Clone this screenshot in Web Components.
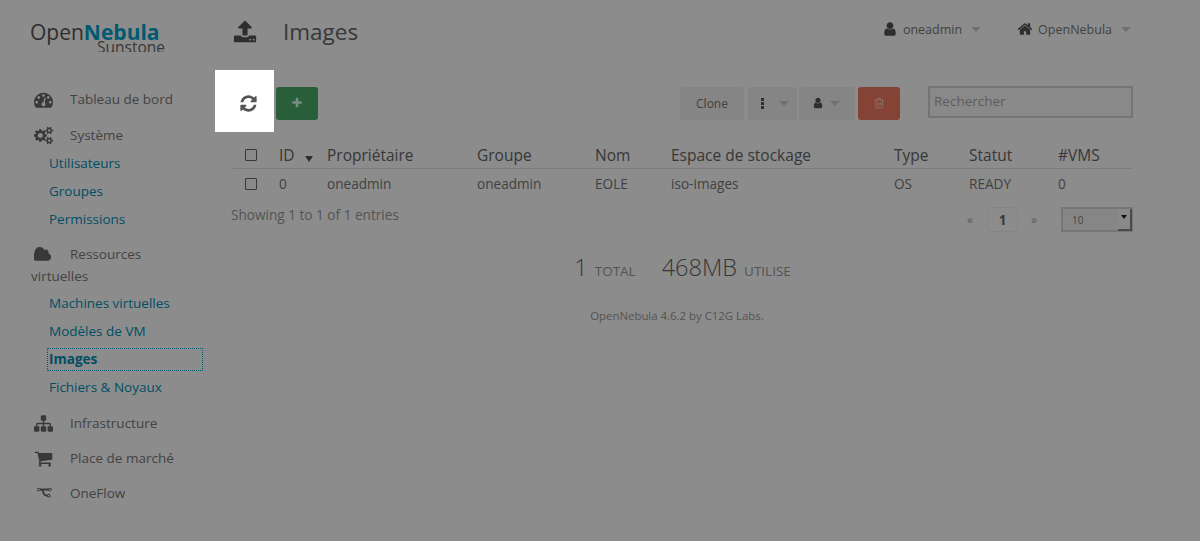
<!DOCTYPE html>
<html lang="fr">
<head>
<meta charset="utf-8">
<title>OpenNebula Sunstone</title>
<style>
  html, body { margin: 0; height: 541px; overflow: hidden; background: #fff; }
  body { font-family: "Open Sans", "Liberation Sans", sans-serif; color: #555; }
</style>
</head>
<body>
<one-app>
  <side-nav>
    <nav-item icon="dashboard">Tableau de bord</nav-item>
    <nav-item icon="cogs" gap="8">Système</nav-item>
    <sub-item>Utilisateurs</sub-item>
    <sub-item>Groupes</sub-item>
    <sub-item>Permissions</sub-item>
    <nav-item icon="cloud" gap="12" bottom="5">Ressources virtuelles</nav-item>
    <sub-item>Machines virtuelles</sub-item>
    <sub-item>Modèles de VM</sub-item>
    <sub-item active>Images</sub-item>
    <sub-item>Fichiers &amp; Noyaux</sub-item>
    <nav-item icon="sitemap" gap="13">Infrastructure</nav-item>
    <nav-item icon="cart" gap="7">Place de marché</nav-item>
    <nav-item icon="flow" gap="7">OneFlow</nav-item>
  </side-nav>
  <main-pane>
    <top-bar></top-bar>
    <tool-bar></tool-bar>
    <image-table></image-table>
    <table-footer></table-footer>
    <image-stats></image-stats>
  </main-pane>
</one-app>

<script>
const PATHS = {
  refresh: ['0 0 1792 1792', 'M1639 1056q0 5-1 7-64 268-268 434.5t-478 166.5q-146 0-282.5-55t-243.5-157l-129 129q-19 19-45 19t-45-19-19-45v-448q0-26 19-45t45-19h448q26 0 45 19t19 45-19 45l-137 137q71 66 161 102t187 36q134 0 250-65t186-179q11-17 53-117 8-23 30-23h192q13 0 22.5 9.5t9.5 22.5zm25-800v448q0 26-19 45t-45 19h-448q-26 0-45-19t-19-45 19-45l138-138q-148-137-349-137-134 0-250 65t-186 179q-11 17-53 117-8 23-30 23h-199q-13 0-22.5-9.5t-9.5-22.5v-7q65-268 270-434.5t480-166.5q146 0 284 55.5t245 156.5l130-129q19-19 45-19t45 19 19 45z'],
  user: ['0 0 1792 1792', 'M1536 1399q0 109-62.5 187t-150.5 78h-854q-88 0-150.5-78t-62.5-187q0-85 8.500-160.500t31.500-152 58.500-131 94-89 134.500-34.500q131 128 313 128t313-128q76 0 134.500 34.500t94 89 58.500 131 31.500 152 8.500 160.500zm-256-887q0 159-112.500 271.500t-271.500 112.500-271.500-112.500-112.500-271.500 112.500-271.500 271.500-112.500 271.500 112.500 112.500 271.500z'],
  home: ['0 0 1792 1792', 'M1472 992v480q0 26-19 45t-45 19h-384v-384h-256v384h-384q-26 0-45-19t-19-45v-480q0-1 .5-3t.5-3l575-474 575 474q1 2 1 6zm223-69l-62 74q-8 9-21 11h-3q-13 0-21-7l-692-577-692 577q-12 8-24 7-13-2-21-11l-62-74q-8-10-7-23.500t11-21.500l719-599q32-26 76-26t76 26l244 204v-195q0-14 9-23t23-9h192q14 0 23 9t9 23v408l219 182q10 8 11 21.500t-7 23.500z'],
  plus: ['0 0 1792 1792', 'M1600 736v192q0 40-28 68t-68 28h-416v416q0 40-28 68t-68 28h-192q-40 0-68-28t-28-68v-416h-416q-40 0-68-28t-28-68v-192q0-40 28-68t68-28h416v-416q0-40 28-68t68-28h192q40 0 68 28t28 68v416h416q40 0 68 28t28 68z'],
  trash: ['0 0 1792 1792', 'M704 736v576q0 14-9 23t-23 9h-64q-14 0-23-9t-9-23v-576q0-14 9-23t23-9h64q14 0 23 9t9 23zm256 0v576q0 14-9 23t-23 9h-64q-14 0-23-9t-9-23v-576q0-14 9-23t23-9h64q14 0 23 9t9 23zm256 0v576q0 14-9 23t-23 9h-64q-14 0-23-9t-9-23v-576q0-14 9-23t23-9h64q14 0 23 9t9 23zm128 724v-948h-896v948q0 22 7 40.500t14.500 27 10.500 8.500h832q3 0 10.500-8.500t14.500-27 7-40.500zm-672-1076h448l-48-117q-7-9-17-11h-317q-10 2-17 11zm928 32v64q0 14-9 23t-23 9h-96v948q0 83-47 143.500t-113 60.500h-832q-66 0-113-58.500t-47-141.500v-952h-96q-14 0-23-9t-9-23v-64q0-14 9-23t23-9h309l70-167q15-37 54-63t79-26h320q40 0 79 26t54 63l70 167h309q14 0 23 9t9 23z'],
  cloud: ['0 0 1920 1792', 'M1728 1152q0 159-112.500 271.500t-271.500 112.500h-1088q-185 0-316.500-131.500t-131.500-316.500q0-132 71-241.500t187-163.500q-2-28-2-43 0-212 150-362t362-150q158 0 286.500 88t187.500 230q70-62 166-62 106 0 181 75t75 181q0 75-41 138 129 30 213 134.500t84 239.500z'],
  sitemap: ['0 0 1792 1792', 'M1792 1248v320q0 40-28 68t-68 28h-320q-40 0-68-28t-28-68v-320q0-40 28-68t68-28h96v-192h-512v192h96q40 0 68 28t28 68v320q0 40-28 68t-68 28h-320q-40 0-68-28t-28-68v-320q0-40 28-68t68-28h96v-192h-512v192h96q40 0 68 28t28 68v320q0 40-28 68t-68 28h-320q-40 0-68-28t-28-68v-320q0-40 28-68t68-28h96v-192q0-52 38-90t90-38h512v-192h-96q-40 0-68-28t-28-68v-320q0-40 28-68t68-28h320q40 0 68 28t28 68v320q0 40-28 68t-68 28h-96v192h512q52 0 90 38t38 90v192h96q40 0 68 28t28 68z'],
  cart: ['0 0 1792 1792', 'M704 1536q0 52-38 90t-90 38-90-38-38-90 38-90 90-38 90 38 38 90zm896 0q0 52-38 90t-90 38-90-38-38-90 38-90 90-38 90 38 38 90zm128-1088v512q0 24-16.500 42.500t-40.500 21.500l-1044 122q13 60 13 70 0 16-24 64h920q26 0 45 19t19 45-19 45-45 19h-1024q-26 0-45-19t-19-45q0-11 8-31.500t16-36 21.500-40 15.500-29.500l-177-823h-204q-26 0-45-19t-19-45 19-45 45-19h256q16 0 28.500 6.500t19.500 15.500 13 24.500 8 26 5.500 29.500 4.500 26h1201q26 0 45 19t19 45z'],
  dashboard: ['0 0 1792 1792', 'M384 1152q0-53-37.500-90.500t-90.500-37.500-90.500 37.500-37.500 90.500 37.500 90.500 90.500 37.500 90.500-37.500 37.500-90.500zm192-448q0-53-37.500-90.500t-90.500-37.500-90.500 37.500-37.500 90.500 37.500 90.500 90.500 37.500 90.500-37.500 37.500-90.500zm428 481l101-382q6-26-7.500-48.500t-38.500-29.500-48 6.500-30 39.500l-101 382q-60 5-107 43.500t-63 98.500q-20 77 20 146t117 89 146-20 89-117q16-60-6-117t-72-91zm660-33q0-53-37.500-90.500t-90.500-37.500-90.500 37.500-37.500 90.500 37.500 90.500 90.500 37.500 90.500-37.500 37.500-90.500zm-640-640q0-53-37.500-90.500t-90.500-37.500-90.500 37.500-37.500 90.500 37.500 90.500 90.500 37.500 90.500-37.500 37.500-90.500zm448 192q0-53-37.500-90.500t-90.500-37.500-90.500 37.500-37.500 90.500 37.500 90.500 90.500 37.500 90.500-37.500 37.500-90.500zm320 448q0 261-141 483-19 29-54 29h-1402q-35 0-54-29-141-221-141-483 0-182 71-348t191-286 286-191 348-71 348 71 286 191 191 286 71 348z'],
  cogs: ['0 0 1920 1792', 'M896 896q0-106-75-181t-181-75-181 75-75 181 75 181 181 75 181-75 75-181zm768 512q0-52-38-90t-90-38-90 38-38 90q0 53 37.500 90.500t90.500 37.500 90.500-37.500 37.500-90.500zm0-1024q0-52-38-90t-90-38-90 38-38 90q0 53 37.500 90.500t90.500 37.500 90.500-37.500 37.500-90.500zm-384 421v185q0 10-7 19.500t-16 10.500l-155 24q-11 35-32 76 34 48 90 115 7 11 7 20 0 12-7 19-23 30-82.500 89.500t-78.500 59.500q-11 0-21-7l-115-90q-37 19-77 31-11 108-23 155-7 24-30 24h-186q-11 0-20-7.500t-10-17.500l-23-153q-34-10-75-31l-118 89q-7 7-20 7-11 0-21-8-144-133-144-160 0-9 7-19 10-14 41-53t47-61q-23-44-35-82l-152-24q-10-1-17-9.500t-7-19.500v-185q0-10 7-19.500t16-10.500l155-24q11-35 32-76-34-48-90-115-7-11-7-20 0-12 7-20 22-30 82-89t79-59q11 0 21 7l115 90q34-18 77-32 11-108 23-154 7-24 30-24h186q11 0 20 7.500t10 17.500l23 153q34 10 75 31l118-89q8-7 20-7 11 0 21 8 144 133 144 160 0 8-7 19-12 16-42 54t-45 60q23 48 34 82l152 23q10 2 17 10.500t7 19.500zm640 533v140q0 16-149 31-12 27-30 52 51 113 51 138 0 4-4 7-122 71-124 71-8 0-46-47t-52-68q-20 2-30 2t-30-2q-14 21-52 68t-46 47q-2 0-124-71-4-3-4-7 0-25 51-138-18-25-30-52-149-15-149-31v-140q0-16 149-31 13-29 30-52-51-113-51-138 0-4 4-7 4-2 35-20t59-34 30-16q8 0 46 46.500t52 67.500q20-2 30-2t30 2q51-71 92-112l6-2q4 0 124 70 4 3 4 7 0 25-51 138 17 23 30 52 149 15 149 31zm0-1024v140q0 16-149 31-12 27-30 52 51 113 51 138 0 4-4 7-122 71-124 71-8 0-46-47t-52-68q-20 2-30 2t-30-2q-14 21-52 68t-46 47q-2 0-124-71-4-3-4-7 0-25 51-138-18-25-30-52-149-15-149-31v-140q0-16 149-31 13-29 30-52-51-113-51-138 0-4 4-7 4-2 35-20t59-34 30-16q8 0 46 46.500t52 67.500q20-2 30-2t30 2q51-71 92-112l6-2q4 0 124 70 4 3 4 7 0 25-51 138 17 23 30 52 149 15 149 31z'],
  upload: ['0 0 1792 1792', 'M1344 1472q0-26-19-45t-45-19-45 19-19 45 19 45 45 19 45-19 19-45zm256 0q0-26-19-45t-45-19-45 19-19 45 19 45 45 19 45-19 19-45zm128-224v320q0 40-28 68t-68 28h-1472q-40 0-68-28t-28-68v-320q0-40 28-68t68-28h427q21 56 70.500 92t110.500 36h256q61 0 110.500-36t70.500-92h427q40 0 68 28t28 68zm-325-648q-17 40-59 40h-256v448q0 26-19 45t-45 19h-256q-26 0-45-19t-19-45v-448h-256q-42 0-59-40-17-39 14-69l448-448q18-19 45-19t45 19l448 448q31 30 14 69z'],
  dots: ['0 0 1792 1792', 'M720 240h352v352h-352zM720 720h352v352h-352zM720 1200h352v352h-352z'],
  flow: ['0 0 1792 1792', 'M576 1376q0-40-28-68t-68-28-68 28-28 68 28 68 68 28 68-28 28-68zm0-1152q0-40-28-68t-68-28-68 28-28 68 28 68 68 28 68-28 28-68zm640 128q0-40-28-68t-68-28-68 28-28 68 28 68 68 28 68-28 28-68zm96 0q0 52-26 96.500t-70 69.500q-2 287-226 414-67 38-203 81-128 40-169.500 71t-41.500 100v26q44 25 70 69.500t26 96.500q0 80-56 136t-136 56-136-56-56-136q0-52 26-96.500t70-69.500v-820q-44-25-70-69.500t-26-96.500q0-80 56-136t136-56 136 56 56 136q0 52-26 96.500t-70 69.500v497q54-26 154-57 55-17 87.500-29.500t70.500-31 59-39.500 40.500-51 28-69.500 8.500-91.500q-44-25-70-69.500t-26-96.500q0-80 56-136t136-56 136 56 56 136z']
};

function svgIcon(name, size, extra) {
  const p = PATHS[name];
  return `<svg width="${size}" height="${size}" viewBox="${p[0]}" fill="currentColor" style="${extra || ''}"><path d="${p[1]}"/></svg>`;
}

// petite base commune pour les composants
class Base extends HTMLElement {
  constructor() {
    super();
    this.attachShadow({ mode: 'open' });
  }
  connectedCallback() {
    this.render();
  }
}

class OneApp extends Base {
  render() {
    this.shadowRoot.innerHTML = `
      <style>
        :host { display: flex; width: 1200px; height: 541px; overflow: hidden; }
        .overlay { position: absolute; inset: 0; background: rgba(0,0,0,.45); z-index: 10; }
      </style>
      <slot></slot>
      <div class="overlay"></div>
    `;
  }
}

class SideNav extends Base {
  render() {
    this.shadowRoot.innerHTML = `
      <style>
        :host { display: block; width: 215px; flex: none; box-sizing: border-box; padding: 0 12px 0 30px; }
        .logo { height: 33px; margin: 19px 0 36px; font-size: 21px; line-height: 26px; color: #555; white-space: nowrap; }
        .logo b { color: #00a5cf; font-weight: 700; }
        .logo span { display: block; height: 13px; overflow: hidden; font-size: 15.5px; line-height: 16px; margin: -6px 0 0 67px; color: #666; }
      </style>
      <div class="logo">Open<b>Nebula</b><span>Sunstone</span></div>
      <slot></slot>
    `;
  }
}

class NavItem extends Base {
  render() {
    const gap = this.getAttribute('gap') || 0;
    const bottom = this.getAttribute('bottom') || 6;
    const icon = this.getAttribute('icon');
    this.shadowRoot.innerHTML = `
      <style>
        :host { display: block; font-size: 13.5px; line-height: 22px; color: #7a7a7a; margin-top: ${gap}px; padding: 0 12px ${bottom}px 1px; }
        .ic { display: inline-block; width: 39px; vertical-align: top; color: #666; height: 22px; }
        svg { display: block; margin: 2px 0 0 3px; }
      </style>
      <span class="ic">${svgIcon(icon, 19, icon === 'flow' ? 'transform: rotate(90deg) scale(.9)' : '')}</span><slot></slot>
    `;
  }
}

class SubItem extends Base {
  render() {
    const active = this.hasAttribute('active');
    this.shadowRoot.innerHTML = `
      <style>
        :host { display: block; font-size: 13.5px; line-height: 21px; margin: 0 0 5px 17px; padding: 0 1px 0 1px; color: #0090b8; font-weight: ${active ? 700 : 400}; border: 1px dotted ${active ? '#00a5cf' : 'transparent'}; }
      </style>
      <slot></slot>
    `;
  }
}

class MainPane extends Base {
  render() {
    this.shadowRoot.innerHTML = `
      <style>
        :host { display: block; flex: 1; min-width: 0; padding-right: 67px; }
      </style>
      <slot></slot>
    `;
  }
}

class TopBar extends Base {
  render() {
    this.shadowRoot.innerHTML = `
      <style>
        :host { display: flex; align-items: center; height: 70px; box-sizing: border-box; padding: 0 2px 12px 18px; color: #555; }
        .title { display: flex; align-items: center; flex: 1; font-size: 22.5px; color: #666; margin-top: 5px; }
        .title svg { margin: 0 26px 0 0; color: #555; }
        .menu { display: flex; align-items: center; font-size: 12.5px; color: #777; margin-left: 36px; }
        .menu svg { margin-right: 5px; color: #555; }
        .caret { width: 0; height: 0; border: 5px solid transparent; border-top-color: #ccc; border-bottom: 0; margin-left: 9px; }
      </style>
      <div class="title">${svgIcon('upload', 24)}<span>Images</span></div>
      <div class="menu">${svgIcon('user', 16)}<span>oneadmin</span><i class="caret"></i></div>
      <div class="menu">${svgIcon('home', 16)}<span>OpenNebula</span><i class="caret"></i></div>
    `;
  }
}

class ToolBar extends Base {
  render() {
    this.shadowRoot.innerHTML = `
      <style>
        :host { display: flex; align-items: center; height: 62px; margin-bottom: 7px; }
        .refresh { position: relative; z-index: 20; width: 59px; height: 62px; background: #fff; display: flex; align-items: center; justify-content: center; color: #555; padding: 4px 0 0 7px; box-sizing: border-box; }
        .btn { height: 33px; box-sizing: border-box; border-radius: 3px; display: flex; align-items: center; justify-content: center; font-size: 12px; color: #777; background: #f2f2f2; margin: 4px 0 0 3px; }
        .add { width: 42px; background: #4aae6a; color: #dfe; margin-left: 2px; }
        .clone { width: 64px; margin-left: 0; }
        .drop { width: 49px; margin-left: 4px; padding-right: 1px; }
        .drop svg { margin-right: 3px; }
        .owner { width: 56px; margin-left: 2px; padding-right: 2px; }
        .del { width: 42px; background: #f07a62; color: #ffc8bb; }
        .caret { width: 0; height: 0; border: 5px solid transparent; border-top-color: #ccc; border-bottom: 0; margin-left: 6px; }
        .drop svg, .owner svg { color: #555; }
        .push { margin-left: auto; display: flex; align-items: center; }
        input { width: 205px; height: 32px; box-sizing: border-box; margin: 2px 0 0 28px; padding: 0 4px 2px; border: 2px solid #d4d4d4; background: #fafafa; font: 13.5px "Open Sans", "Liberation Sans", sans-serif; border-radius: 1px; outline: 0; }
        input::placeholder { color: #aaa; opacity: 1; }
      </style>
      <div class="refresh">${svgIcon('refresh', 19)}</div>
      <div class="btn add">${svgIcon('plus', 12)}</div>
      <div class="push">
        <div class="btn clone">Clone</div>
        <div class="btn drop">${svgIcon('dots', 15)}<i class="caret"></i></div>
        <div class="btn owner">${svgIcon('user', 12)}<i class="caret"></i></div>
        <div class="btn del">${svgIcon('trash', 12)}</div>
        <input placeholder="Rechercher">
      </div>
    `;
  }
}

class ImageTable extends Base {
  render() {
    const box = '<i class="box"></i>';
    this.shadowRoot.innerHTML = `
      <style>
        :host { display: block; margin-left: 18px; }
        table { width: 100%; border-collapse: collapse; table-layout: fixed; }
        th { font-size: 15.5px; font-weight: 400; text-align: left; height: 30px; padding: 1px 0 0; box-sizing: border-box; color: #666; box-shadow: inset 0 -1px 0 #e3e3e3; }
        td { font-size: 13.6px; height: 29px; padding: 0; color: #777; }
        .box { display: block; width: 10px; height: 10px; border: 1px solid #666; border-radius: 1px; margin-left: 12px; background: #fafafa; }
        .sort { display: inline-block; width: 0; height: 0; border: 4px solid transparent; border-top: 6px solid #555; border-bottom: 0; margin-left: 10px; vertical-align: -1px; }
      </style>
      <table>
        <colgroup><col style="width:46px"><col style="width:48px"><col style="width:150px"><col style="width:118px"><col style="width:76px"><col style="width:223px"><col style="width:75px"><col style="width:89px"><col></colgroup>
        <thead><tr><th>${box}</th><th>ID<i class="sort"></i></th><th>Propriétaire</th><th>Groupe</th><th>Nom</th><th>Espace de stockage</th><th>Type</th><th>Statut</th><th>#VMS</th></tr></thead>
        <tbody><tr><td>${box}</td><td>0</td><td>oneadmin</td><td>oneadmin</td><td>EOLE</td><td>iso-images</td><td>OS</td><td>READY</td><td>0</td></tr></tbody>
      </table>
    `;
  }
}

class TableFooter extends Base {
  render() {
    this.shadowRoot.innerHTML = `
      <style>
        :host { display: flex; align-items: center; height: 25px; margin: 9px 0 0 16px; font-size: 13.6px; color: #999; }
        .info { flex: 1; margin-top: -10px; }
        .pg { display: flex; align-items: center; margin-right: 24px; font-size: 12px; color: #aaa; }
        .cur { width: 31px; height: 25px; box-sizing: border-box; border: 1px solid #f2f2f2; border-radius: 3px; margin: 0 13px 0 14px; display: flex; align-items: center; justify-content: center; font-size: 13.5px; font-weight: 700; color: #666; }
        .sel { width: 72px; height: 25px; box-sizing: border-box; border: 2px solid #d8d8d8; background: #f5f5f5; font-size: 10px; color: #777; display: flex; align-items: center; padding: 0 9px; position: relative; }
        .arrow { position: absolute; right: -1px; top: 0; bottom: -1px; width: 14px; background: #fafafa; border-right: 2px solid #888; border-bottom: 2px solid #888; display: flex; justify-content: center; padding-top: 6px; box-sizing: border-box; }
        .arrow i { width: 0; height: 0; border: 3px solid transparent; border-top: 4px solid #222; border-bottom: 0; }
      </style>
      <div class="info">Showing 1 to 1 of 1 entries</div>
      <div class="pg"><span>«</span><div class="cur">1</div><span>»</span></div>
      <div class="sel">10<span class="arrow"><i></i></span></div>
    `;
  }
}

class ImageStats extends Base {
  render() {
    this.shadowRoot.innerHTML = `
      <style>
        :host { display: block; margin-top: 19px; text-align: center; color: #888; }
        .row { font-size: 23.5px; height: 33px; line-height: 33px; color: #666; font-weight: 300; padding-left: 17px; }
        .row small { font-size: 13.5px; color: #999; margin: 0 26px 0 1px; font-weight: 400; }
        .row small:last-child { margin-right: 0; }
        p { margin: 24px 0 0; padding-left: 6px; font-size: 11.4px; color: #999; }
      </style>
      <div class="row">1 <small>TOTAL</small>468MB <small>UTILISE</small></div>
      <p>OpenNebula 4.6.2 by C12G Labs.</p>
    `;
  }
}

customElements.define('one-app', OneApp);
customElements.define('side-nav', SideNav);
customElements.define('nav-item', NavItem);
customElements.define('sub-item', SubItem);
customElements.define('main-pane', MainPane);
customElements.define('top-bar', TopBar);
customElements.define('tool-bar', ToolBar);
customElements.define('image-table', ImageTable);
customElements.define('table-footer', TableFooter);
customElements.define('image-stats', ImageStats);
</script>
</body>
</html>
